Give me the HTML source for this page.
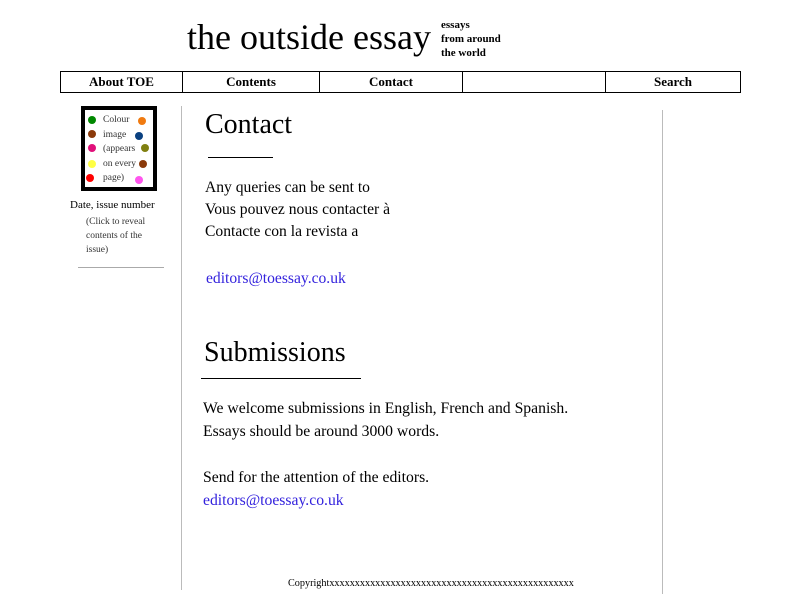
<html><head><style>
body{margin:0;width:800px;height:600px;background:#fff;font-family:"Liberation Serif",serif;position:relative;overflow:hidden;color:#000}
.a{position:absolute;white-space:nowrap}
.nav{position:absolute;top:71px;left:60px;width:679px;height:20px;border:1px solid #000;font-weight:bold;font-size:13px}
.nav div{position:absolute;top:0;height:20px;line-height:20px;text-align:center;border-right:1px solid #000}
.dot{position:absolute;width:8px;height:8px;border-radius:50%}
.link{color:#3322dd}
</style></head><body>
<div class="a" style="left:187px;top:16px;font-size:36px">the outside essay</div>
<div class="a" style="left:441px;top:18px;font-size:11px;font-weight:bold;line-height:14px">essays<br>from around<br>the world</div>
<div class="nav">
<div style="left:0;width:121px">About TOE</div>
<div style="left:122px;width:136px">Contents</div>
<div style="left:259px;width:142px">Contact</div>
<div style="left:402px;width:142px"></div>
<div style="left:545px;width:134px;border:none">Search</div>
</div>
<div class="a" style="left:81px;top:106px;width:68px;height:77px;border:4px solid #000"></div>
<div class="dot" style="left:88px;top:116px;background:#080"></div>
<div class="dot" style="left:88px;top:130px;background:#8b3a0a"></div>
<div class="dot" style="left:88px;top:144px;background:#e0107a"></div>
<div class="dot" style="left:88px;top:160px;background:#ffff44"></div>
<div class="dot" style="left:86px;top:174px;background:#f00"></div>
<div class="dot" style="left:138px;top:117px;background:#f07a10"></div>
<div class="dot" style="left:135px;top:132px;background:#0a4080"></div>
<div class="dot" style="left:141px;top:144px;background:#808010"></div>
<div class="dot" style="left:139px;top:160px;background:#8b3a0a"></div>
<div class="dot" style="left:135px;top:176px;background:#ff55ee"></div>
<div class="a" style="left:103px;top:113px;font-size:9.5px;line-height:14.5px;color:#333">Colour<br>image<br>(appears<br>on every<br>page)</div>
<div class="a" style="left:70px;top:199px;font-size:11px">Date, issue number</div>
<div class="a" style="left:86px;top:215px;font-size:9.5px;line-height:14px;color:#333">(Click to reveal<br>contents of the<br>issue)</div>
<div class="a" style="left:78px;top:267px;width:86px;border-top:1px solid #aaa"></div>
<div class="a" style="left:181px;top:106px;height:484px;border-left:1px solid #bbb"></div>
<div class="a" style="left:662px;top:110px;height:484px;border-left:1px solid #bbb"></div>
<div class="a" style="left:205px;top:109px;font-size:28px">Contact</div>
<div class="a" style="left:208px;top:157px;width:65px;border-top:1px solid #000"></div>
<div class="a" style="left:205px;top:177px;font-size:15.6px;line-height:22px">Any queries can be sent to<br>Vous pouvez nous contacter à<br>Contacte con la revista a</div>
<div class="a link" style="left:206px;top:270px;font-size:15.6px">editors@toessay.co.uk</div>
<div class="a" style="left:204px;top:337px;font-size:28px">Submissions</div>
<div class="a" style="left:201px;top:378px;width:160px;border-top:1px solid #000"></div>
<div class="a" style="left:203px;top:397px;font-size:15.7px;line-height:23px">We welcome submissions in English, French and Spanish.<br>Essays should be around 3000 words.<br><br>Send for the attention of the editors.<br><span class="link">editors@toessay.co.uk</span></div>
<div class="a" style="left:288px;top:578px;font-size:10.2px">Copyrightxxxxxxxxxxxxxxxxxxxxxxxxxxxxxxxxxxxxxxxxxxxxxxxx</div>
</body></html>
